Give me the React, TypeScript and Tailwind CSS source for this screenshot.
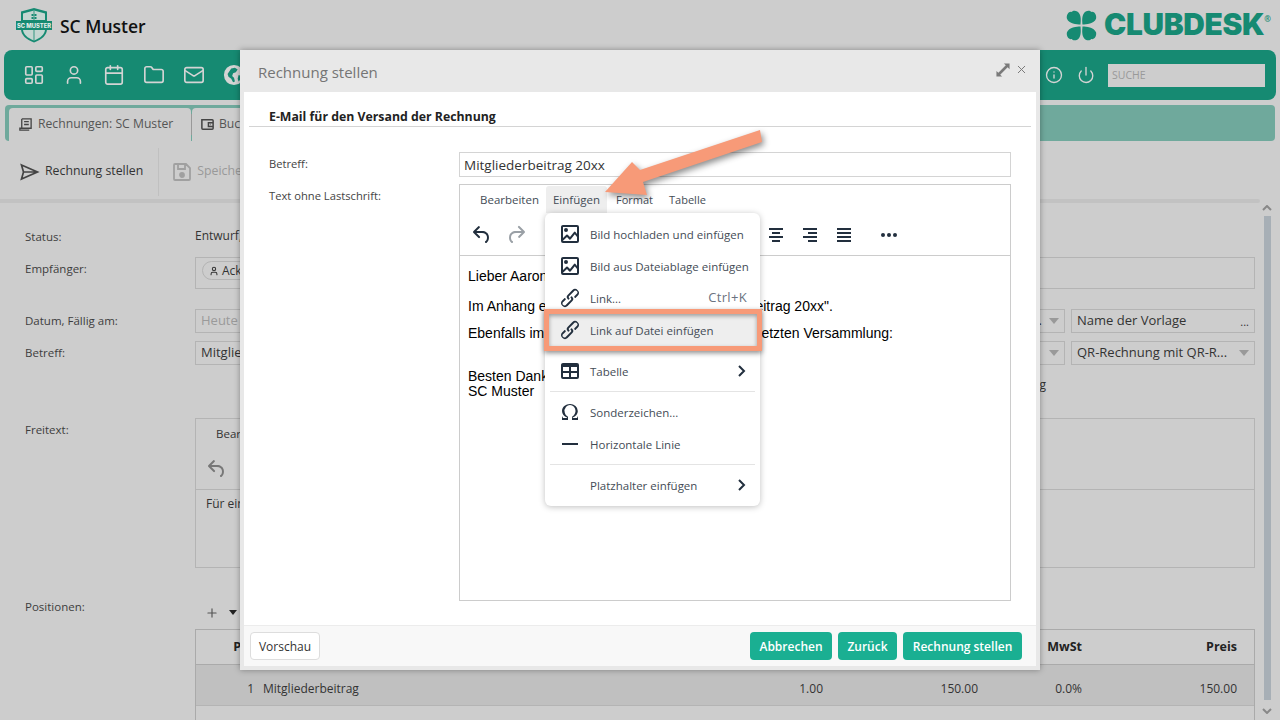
import React from "react";
import { User, Calendar, Folder, Mail, Info, Power, X, Plus, LayoutDashboard } from "lucide-react";

const P = {
  undo: "M6.4 8H12c3.7 0 6.2 2 6.8 5.1.6 2.7-.4 5.6-2.3 6.8a1 1 0 0 1-1-1.8c1.1-.6 1.8-2.7 1.4-4.6-.5-2.1-2.1-3.5-4.9-3.5H6.4l3.3 3.3a1 1 0 1 1-1.4 1.4l-5-5a1 1 0 0 1 0-1.4l5-5a1 1 0 0 1 1.4 1.4L6.4 8z",
  redo: "M17.6 10H12c-2.8 0-4.4 1.4-4.9 3.5-.4 2 .3 4 1.4 4.6a1 1 0 1 1-1 1.8c-2-1.2-2.9-4.1-2.3-6.8.6-3 3-5.1 6.8-5.1h5.6l-3.3-3.3a1 1 0 1 1 1.4-1.4l5 5a1 1 0 0 1 0 1.4l-5 5a1 1 0 0 1-1.4-1.4l3.3-3.3z",
  link: "M6.2 12.3a1 1 0 0 1 1.4 1.4l-2 2a2 2 0 1 0 2.6 2.8l4.8-4.8a1 1 0 0 0 0-1.4 1 1 0 1 1 1.4-1.3 2.9 2.9 0 0 1 0 4L9.6 20a3.9 3.9 0 0 1-5.5-5.5l2-2zm11.6-.6a1 1 0 0 1-1.4-1.4l2-2a2 2 0 1 0-2.6-2.8L11 10.3a1 1 0 0 0 0 1.4A1 1 0 1 1 9.6 13a2.9 2.9 0 0 1 0-4L14.4 4a3.9 3.9 0 0 1 5.5 5.500l-2 2z",
  table: "M19 4a2 2 0 0 1 2 2v12a2 2 0 0 1-2 2H5a2 2 0 0 1-2-2V6c0-1.1.9-2 2-2h14zM5 14v4h6v-4H5zm14 0h-6v4h6v-4zm0-6h-6v4h6V8zM5 12h6V8H5v4z",
  image: "M5 3h14a2 2 0 0 1 2 2v14a2 2 0 0 1-2 2H5a2 2 0 0 1-2-2V5c0-1.1.9-2 2-2zm0 2v11l3.3-3.2a1 1 0 0 1 1.4 0L12 15l4-5a1 1 0 0 1 1.5 0L19 12V5H5zm0 14h14v-4l-2.2-2.7-4 5a1 1 0 0 1-1.5.1L9 15l-4 3.800V19zM8 10a2 2 0 1 1 0-4 2 2 0 0 1 0 4z",
  omega: "M15 18h4l1-2v4h-6v-3.3l1.4-1a6 6 0 0 0 1.8-2.9 6.3 6.3 0 0 0-.1-4.1 5.8 5.8 0 0 0-3-3.2c-.6-.3-1.3-.5-2.1-.5a5.1 5.1 0 0 0-3.9 1.8 6.3 6.3 0 0 0-1.3 6 6.2 6.2 0 0 0 1.8 3l1.4.9V20H4v-4l1 2h4v-.5l-2-1L5.4 15A6.5 6.5 0 0 1 4 11c0-1 .2-1.9.6-2.7A7 7 0 0 1 6.3 6C7.1 5.4 8 5 9 4.5c1-.3 2-.5 3-.5a8.2 8.2 0 0 1 5.5 2 6.8 6.8 0 0 1 2.3 5c0 1.4-.5 2.8-1.4 4l-1.7 1.5-2 .9v.6z",
  hr: "M4 11h16v2H4z",
  center: "M5 5h14v2H5zM8 9h8v2H8zM5 13h14v2H5zM8 17h8v2H8z",
  right: "M5 5h14v2H5zM10 9h9v2h-9zM5 13h14v2H5zM10 17h9v2h-9z",
  justify: "M5 5h14v2H5zM5 9h14v2H5zM5 13h14v2H5zM5 17h14v2H5z",
};

function Mce({ d, className = "" }: { d: string; className?: string }) {
  return (
    <svg viewBox="0 0 24 24" className={className} fill="currentColor" fillRule="evenodd">
      <path d={d} />
    </svg>
  );
}

function Chevron() {
  return (
    <svg viewBox="0 0 10 14" className="w-[10px] h-[14px]" fill="none" stroke="#222f3e" strokeWidth="2">
      <path d="M2 2l5 5-5 5" />
    </svg>
  );
}

function Caret({ light = false, small = false }: { light?: boolean; small?: boolean }) {
  return (
    <svg viewBox="0 0 10 6" className={small ? "w-[8px] h-[5px]" : "w-[10px] h-[6px]"}>
      <path d="M0 0h10L5 6z" fill={light ? "#999999" : "#222222"} />
    </svg>
  );
}

function Shield() {
  return (
    <svg viewBox="0 0 38 36" className="w-[38px] h-[36px]">
      <path d="M19 1l13 3.500V22c0 6-5 10.500-13 13.500C11 32.500 6 28 6 22V4.500z" fill="#168a72" />
      <path d="M19 3.500L30 6.500V13H8V6.500z" fill="#c4d6d1" />
      <path d="M8 23h22c-.5 4-4 8-11 10.500C12 31 8.500 27 8 23z" fill="#c4d6d1" />
      <path d="M18.300 3.500h1.400v30h-1.400z" fill="#168a72" opacity="0.6" />
      <path d="M16.500 7h2v2h-2zM19.500 7h2v2h-2zM16.500 10h2v2h-2zM19.500 10h2v2h-2z" fill="#168a72" />
      <rect x="1" y="14" width="36" height="9" fill="#168a72" />
      <text x="19" y="21" textAnchor="middle" fontSize="5.800" fontWeight="800" fill="#e4ecea" fontFamily="Inter, sans-serif">SC MUSTER</text>
    </svg>
  );
}

function Clover() {
  return (
    <svg viewBox="0 0 32 32" className="w-[31px] h-[31px]" fill="#168a72">
      <path d="M15 15C11 15 3 14 1 9c-1-4 2-8 5-7 1-2 6-2 8 2 2 4 1 9 1 11z" />
      <path d="M17 15c4 0 12-1 14-6 1-4-2-8-5-7-1-2-6-2-8 2-2 4-1 9-1 11z" />
      <path d="M15 17c-4 0-12 1-14 6-1 4 2 8 5 7 1 2 6 2 8-2 2-4 1-9 1-11z" />
      <path d="M17 17c4 0 12 1 14 6 1 4-2 8-5 7-1 2-6 2-8-2-2-4-1-9-1-11z" />
    </svg>
  );
}

function Globe() {
  return (
    <svg viewBox="0 0 24 24" className="w-[22px] h-[22px]" fill="#d4d4d4">
      <path fillRule="evenodd" d="M12 1a11 11 0 1 0 0 22 11 11 0 0 0 0-22zM9 5l4-1 3 2-2 3-3 1-1 3 2 2 1 4-2 1-2-4-3-2-1-3 2-3zM17 12l3 1-1 4-2 2-1-3z" />
    </svg>
  );
}

function MenuItem({ icon, label, shortcut, more, mark }: { icon?: string; label: string; shortcut?: string; more?: boolean; mark?: boolean }) {
  return (
    <div className={`relative h-8 flex items-center pl-[13px] pr-[13px] ${mark ? "bg-[#eeeeee]" : ""}`}>
      <div className="w-[32px] shrink-0 text-[#222f3e]">{icon && <Mce d={icon} className="w-6 h-6" />}</div>
      <span className="flex-1 whitespace-nowrap pt-[2px] text-[11.500px] text-[#444c56]">{label}</span>
      {shortcut && <span className="text-[13px] text-[#6b7280] tracking-wide">{shortcut}</span>}
      {more && <Chevron />}
      {mark && <div className="absolute -left-[1px] -right-[2px] -top-[5px] -bottom-[5px] border-[5px] border-[#f79a78] shadow-[0_2px_5px_rgba(0,0,0,0.45),inset_0_2px_4px_rgba(0,0,0,0.35)]" />}
    </div>
  );
}

function Sep() {
  return <div className="h-px bg-[#e4e4e4] my-1 mx-[5px]" />;
}

function FieldLabel({ children, className = "" }: { children: React.ReactNode; className?: string }) {
  return <div className={`w-[170px] shrink-0 text-[11.500px] text-[#3d3d3d] ${className}`}>{children}</div>;
}

function PageForm() {
  return (
    <div className="pl-[25px] pr-[25px] text-[#333333]">
      <div className="flex h-[20px] mt-[24px] items-center">
        <FieldLabel>Status:</FieldLabel>
        <span className="text-[12px] -mt-[2px]">Entwurf, noch nicht gestellt</span>
      </div>
      <div className="flex mt-[10px]">
        <FieldLabel className="pt-[3px]">Empfänger:</FieldLabel>
        <div className="flex-1 h-[32px] border border-[#b4b4b4] flex items-start pt-[3px] pl-[6px]">
          <span className="h-[19px] rounded-full border border-[#b4b4b4] pl-[6px] pr-3 flex items-center gap-[3px] text-[12px]">
            <User size={10} strokeWidth={2.500} />Ackermann Aaron
          </span>
        </div>
      </div>
      <div className="flex mt-[20px] gap-[6px] items-center">
        <FieldLabel className="-mr-[6px]">Datum, Fällig am:</FieldLabel>
        <div className="flex-1 h-[24px] border border-[#b4b4b4] flex items-center px-[5px] text-[13px] text-[#9a9a9a]">
          <span className="flex-1">Heute</span><span className="text-[#333333] mr-[7px]">..</span><Caret light />
        </div>
        <div className="w-[184px] h-[24px] border border-[#b4b4b4] flex items-center justify-between px-[5px] text-[13px]">
          Name der Vorlage<span className="text-[11px] leading-none">...</span>
        </div>
      </div>
      <div className="flex mt-[8px] gap-[6px] items-center">
        <FieldLabel className="-mr-[6px]">Betreff:</FieldLabel>
        <div className="flex-1 h-[24px] border border-[#b4b4b4] flex items-center justify-between px-[5px] text-[13px]">
          Mitgliederbeitrag 20xx<Caret light />
        </div>
        <div className="w-[184px] h-[24px] border border-[#b4b4b4] flex items-center justify-between px-[5px] text-[13px]">
          QR-Rechnung mit QR-R...<Caret light />
        </div>
      </div>
      <div className="flex h-[20px] mt-[11px] justify-end pr-[209px] text-[12px]">Zahlung</div>
      <div className="flex mt-[22px]">
        <FieldLabel className="pt-[3px]">Freitext:</FieldLabel>
        <div className="flex-1 h-[150px] border border-[#b4b4b4] flex flex-col">
          <div className="pl-5 pt-[6px] text-[11.500px] h-[31px]">Bearbeiten</div>
          <div className="h-[39px] pl-[9px] pt-[7px] text-[#777777]"><Mce d={P.undo} className="w-6 h-6" /></div>
          <div className="border-t border-[#b4b4b4] pt-[5px] pl-[10px] text-[12px]">Für eine schnelle Bezahlung danken wir</div>
        </div>
      </div>
      <div className="flex mt-[28px]">
        <FieldLabel className="pt-[2px]">Positionen:</FieldLabel>
        <div className="flex-1">
          <div className="h-[33px] flex items-center pl-[10px] gap-[10px] text-[#555555]">
            <Plus size={14} /><Caret small />
          </div>
          <div className="border-l border-r border-t border-[#aaaaaa]">
            <div className="grid grid-cols-[67px_1fr_90px_155px_104px_155px] h-[35px] items-center pt-[1px] pr-[17px] text-[12.500px] font-bold text-[#222222] border-b border-[#aaaaaa]">
              <span className="text-right pr-[8px]">Pos</span><span />
              <span /><span /><span className="text-right">MwSt</span><span className="text-right">Preis</span>
            </div>
            <div className="grid grid-cols-[67px_1fr_90px_155px_104px_155px] h-[41px] items-center pt-[7px] pr-[17px] text-[12px] bg-[#c0c0c0] border-b border-[#b4b4b4]">
              <span className="text-right pr-[9px]">1</span><span>Mitgliederbeitrag</span>
              <span className="text-right">1.00</span><span className="text-right">150.00</span><span className="text-right">0.0%</span><span className="text-right">150.00</span>
            </div>
            <div className="h-[30px]" />
          </div>
        </div>
      </div>
    </div>
  );
}

function Editor() {
  return (
    <div className="relative w-[552px] h-[417px] border border-[#cccccc] flex flex-col">
      <div className="h-[29px] flex items-start pl-[13px] pt-[1px] text-[11.500px] text-[#444c56]">
        <span className="h-[27px] px-[7px] flex items-center">Bearbeiten</span>
        <span className="h-[27px] px-[7px] flex items-center bg-[#eeeeee] rounded-t-[3px]">Einfügen</span>
        <span className="h-[27px] px-[8px] ml-[1px] pt-[2px] flex items-center whitespace-nowrap text-[11px]">Format</span>
        <span className="h-[27px] px-[8px] pt-[2px] flex items-center text-[11px]">Tabelle</span>
      </div>
      <div className="h-[42px] border-b border-[#cccccc] flex items-center text-[#222f3e] pl-[10px]">
        <Mce d={P.undo} className="w-6 h-6" />
        <Mce d={P.redo} className="w-6 h-6 ml-[10px] text-[#9aa0a6]" />
        <div className="flex-1 flex items-center pl-[236px] gap-[10px]">
          <Mce d={P.center} className="w-6 h-6" />
          <Mce d={P.right} className="w-6 h-6" />
          <Mce d={P.justify} className="w-6 h-6" />
          <div className="ml-[15px] flex gap-[2px]">
            <span className="w-1 h-1 rounded-full bg-[#222f3e]" />
            <span className="w-1 h-1 rounded-full bg-[#222f3e]" />
            <span className="w-1 h-1 rounded-full bg-[#222f3e]" />
          </div>
        </div>
      </div>
      <div className="pl-2 pt-[12px] text-[14px] leading-[16px] text-black font-['Liberation_Sans',sans-serif]">
        <p>Lieber Aaron,</p>
        <p className="mt-[14px]">Im Anhang erhältst du die Faktura "Mitgliederbeitrag 20xx".</p>
        <p className="mt-[11px]">Ebenfalls im Anhang siehst du den Bericht der letzten Versammlung:</p>
        <p className="mt-[28px] leading-[15px]">Besten Dank</p>
        <p className="leading-[15px]">SC Muster</p>
      </div>
      <div className="absolute left-[85px] top-[28px] w-[215px] bg-white rounded-[6px] shadow-[0_1px_6px_rgba(0,0,0,0.25)] py-[5px]">
        <MenuItem icon={P.image} label="Bild hochladen und einfügen" />
        <MenuItem icon={P.image} label="Bild aus Dateiablage einfügen" />
        <MenuItem icon={P.link} label="Link..." shortcut="Ctrl+K" />
        <MenuItem icon={P.link} label="Link auf Datei einfügen" mark />
        <Sep />
        <MenuItem icon={P.table} label="Tabelle" more />
        <Sep />
        <MenuItem icon={P.omega} label="Sonderzeichen..." />
        <MenuItem icon={P.hr} label="Horizontale Linie" />
        <Sep />
        <MenuItem label="Platzhalter einfügen" more />
      </div>
    </div>
  );
}

function Dialog() {
  return (
    <div className="absolute left-[240px] top-[50px] w-[800px] h-[620px] bg-[#e8e8e8] flex flex-col shadow-[0_0_6px_rgba(0,0,0,0.35)]">
      <div className="h-[42px] shrink-0 flex items-center pl-[18px] pr-[12px] text-[#757575] text-[15px]">
        <span className="flex-1 pt-[3px]">Rechnung stellen</span>
        <svg viewBox="0 0 16 16" className="w-[14px] h-[14px] -mt-[3px]" fill="#7a7a7a">
          <path d="M15.500 0.500V7L13.300 4.800 4.800 13.300 7 15.500H0.500V9L2.700 11.200 11.200 2.700 9 0.500z" />
        </svg>
        <X size={13} className="ml-[5px] -mt-[3px] text-[#777777]" strokeWidth={1.800} />
      </div>
      <div className="flex-1 mx-[4px] mb-[4px] bg-white flex flex-col min-h-0">
        <div className="mx-[5px] h-[35px] border-b border-[#d4d4d4] pl-5 pt-[16px] text-[12.300px] leading-[17px] font-bold text-[#222222] shrink-0">
          E-Mail für den Versand der Rechnung
        </div>
        <div className="flex-1 pt-[25px] pl-[25px] min-h-0">
          <div className="flex">
            <div className="w-[190px] text-[11.200px] text-[#444444] leading-[23px]">Betreff:</div>
            <div className="w-[552px] h-[25px] border border-[#d4d4d4] pl-1 pt-[1px] flex items-center text-[13.500px] text-[#333333]">Mitgliederbeitrag 20xx</div>
          </div>
          <div className="flex mt-[7px]">
            <div className="w-[190px] text-[11.200px] text-[#444444] leading-[23px]">Text ohne Lastschrift:</div>
            <Editor />
          </div>
        </div>
        <div className="h-[41px] shrink-0 border-t border-[#ececec] bg-[#f8f8f8] flex items-center pl-[6px] pr-[14px] gap-[6px]">
          <button className="w-[70px] h-[28px] pt-[1px] bg-white border border-[#dddddd] rounded-[4px] text-[12px] text-[#333333] mr-auto">Vorschau</button>
          <button className="w-[82px] h-[28px] pt-[1px] bg-[#1aaf92] rounded-[4px] text-[12px] font-semibold text-white">Abbrechen</button>
          <button className="w-[59px] h-[28px] pt-[1px] bg-[#1aaf92] rounded-[4px] text-[12px] font-semibold text-white">Zurück</button>
          <button className="w-[119px] h-[28px] pt-[1px] bg-[#1aaf92] rounded-[4px] text-[12px] font-semibold text-white">Rechnung stellen</button>
        </div>
      </div>
    </div>
  );
}

function Arrow() {
  return (
    <svg viewBox="0 0 180 90" className="absolute left-[600px] top-[125px] w-[180px] h-[90px] drop-shadow-[2px_3px_3px_rgba(0,0,0,0.45)]">
      <path d="M5 67L32 37 40 45 160 5 162 17 43 57 47 70z" fill="#f79a78" />
    </svg>
  );
}

export default function App() {
  return (
    <div className="relative w-[1280px] h-[720px] overflow-hidden bg-[#cdcdcd] font-['Open_Sans',sans-serif]">
      <div className="h-[50px] flex items-center pl-[15px] pr-[9px]">
        <Shield />
        <span className="ml-[7px] pt-[3px] text-[17.500px] font-semibold text-[#111111]">SC Muster</span>
        <div className="flex-1" />
        <Clover />
        <span className="ml-[7px] text-[29.800px] leading-none font-black text-[#168a72] font-['Inter',sans-serif] tracking-[-0.3px]">CLUBDESK</span>
        <span className="text-[8px] font-bold text-[#168a72] self-start mt-[13px]">®</span>
      </div>
      <div className="mx-[4px] h-[50px] bg-[#168a72] rounded-[8px] flex items-center pl-[19px] pr-[11px] text-[#d4d4d4]">
        <div className="flex items-center gap-[18px]">
          <LayoutDashboard size={22} strokeWidth={1.800} />
          <User size={22} strokeWidth={1.800} />
          <Calendar size={22} strokeWidth={1.800} />
          <Folder size={22} strokeWidth={1.800} />
          <Mail size={22} strokeWidth={1.800} />
          <Globe />
        </div>
        <div className="flex-1" />
        <Info size={18} strokeWidth={1.800} />
        <Power size={18} strokeWidth={1.800} className="ml-[14px]" />
        <div className="ml-[13px] w-[157px] h-[23px] bg-[#cdcdcd] flex items-center pl-1 pt-[1px] text-[10.500px] text-[#999999]">SUCHE</div>
      </div>
      <div className="mx-[5px] mt-[5px] h-[36px] bg-[#6fa99c] rounded-[4px] flex pl-[4px] pt-[3px]">
        <div className="w-[182px] bg-[#cdcdcd] rounded-t-[4px] flex items-center pl-[9px] gap-[5px] text-[12.200px] text-[#555555]">
          <svg viewBox="0 0 16 16" className="w-[15px] h-[15px]" fill="none" stroke="#444444" strokeWidth="1.400"><path d="M4 2h10v10H2v2h10M4 2v10M6.500 5h5M6.500 8h5" /></svg>
          Rechnungen: SC Muster
        </div>
        <div className="w-px bg-[#999999] my-[6px]" />
        <div className="flex-1 max-w-[100px] bg-[#cdcdcd] rounded-t-[4px] flex items-center pl-[8px] gap-[4px] text-[12.200px] text-[#555555]">
          <svg viewBox="0 0 16 16" className="w-[15px] h-[15px]" fill="none" stroke="#444444" strokeWidth="1.600"><path d="M2 3h11a1 1 0 0 1 1 1v8a1 1 0 0 1-1 1H3a1 1 0 0 1-1-1zM14 6H9v4h5M11 8h.5" /></svg>
          Buchhaltung
        </div>
      </div>
      <div className="h-[62px] flex flex-col">
        <div className="h-[58px] flex items-center pl-[20px] pt-[3px]">
          <svg viewBox="0 0 20 20" className="w-[20px] h-[20px]" fill="none" stroke="#444444" strokeWidth="1.700"><path d="M1.500 3l16 7-16 7 2-7zM3.500 10h14" /></svg>
          <span className="ml-[5px] text-[12.300px] text-[#333333]">Rechnung stellen</span>
          <div className="ml-[15px] w-px h-[48px] bg-[#c0c0c0]" />
          <svg viewBox="0 0 20 20" className="ml-[13px] w-[20px] h-[20px]" fill="none" stroke="#a0a0a0" strokeWidth="1.800"><path d="M2 3a1 1 0 0 1 1-1h11l4 4v11a1 1 0 0 1-1 1H3a1 1 0 0 1-1-1zM6 2v5h7V2" /><circle cx="10" cy="13" r="2" fill="#a0a0a0" /></svg>
          <span className="ml-[5px] text-[12.300px] text-[#999999]">Speichern</span>
        </div>
        <div className="h-[4px] w-[1260px] bg-[#c2c2c2] rounded-r-[2px]" />
      </div>
      <PageForm />
      <svg viewBox="0 0 10 6" className="absolute left-[1262px] top-[205px] w-[10px] h-[6px]" fill="none" stroke="#888888" strokeWidth="2"><path d="M1 5l4-4 4 4" /></svg>
      <div className="absolute left-[1264px] top-[216px] w-[7px] h-[484px] bg-[#a7afb6]" />
      <svg viewBox="0 0 10 6" className="absolute left-[1262px] top-[708px] w-[10px] h-[6px]" fill="none" stroke="#888888" strokeWidth="2"><path d="M1 1l4 4 4-4" /></svg>
      <Dialog />
      <Arrow />
    </div>
  );
}
